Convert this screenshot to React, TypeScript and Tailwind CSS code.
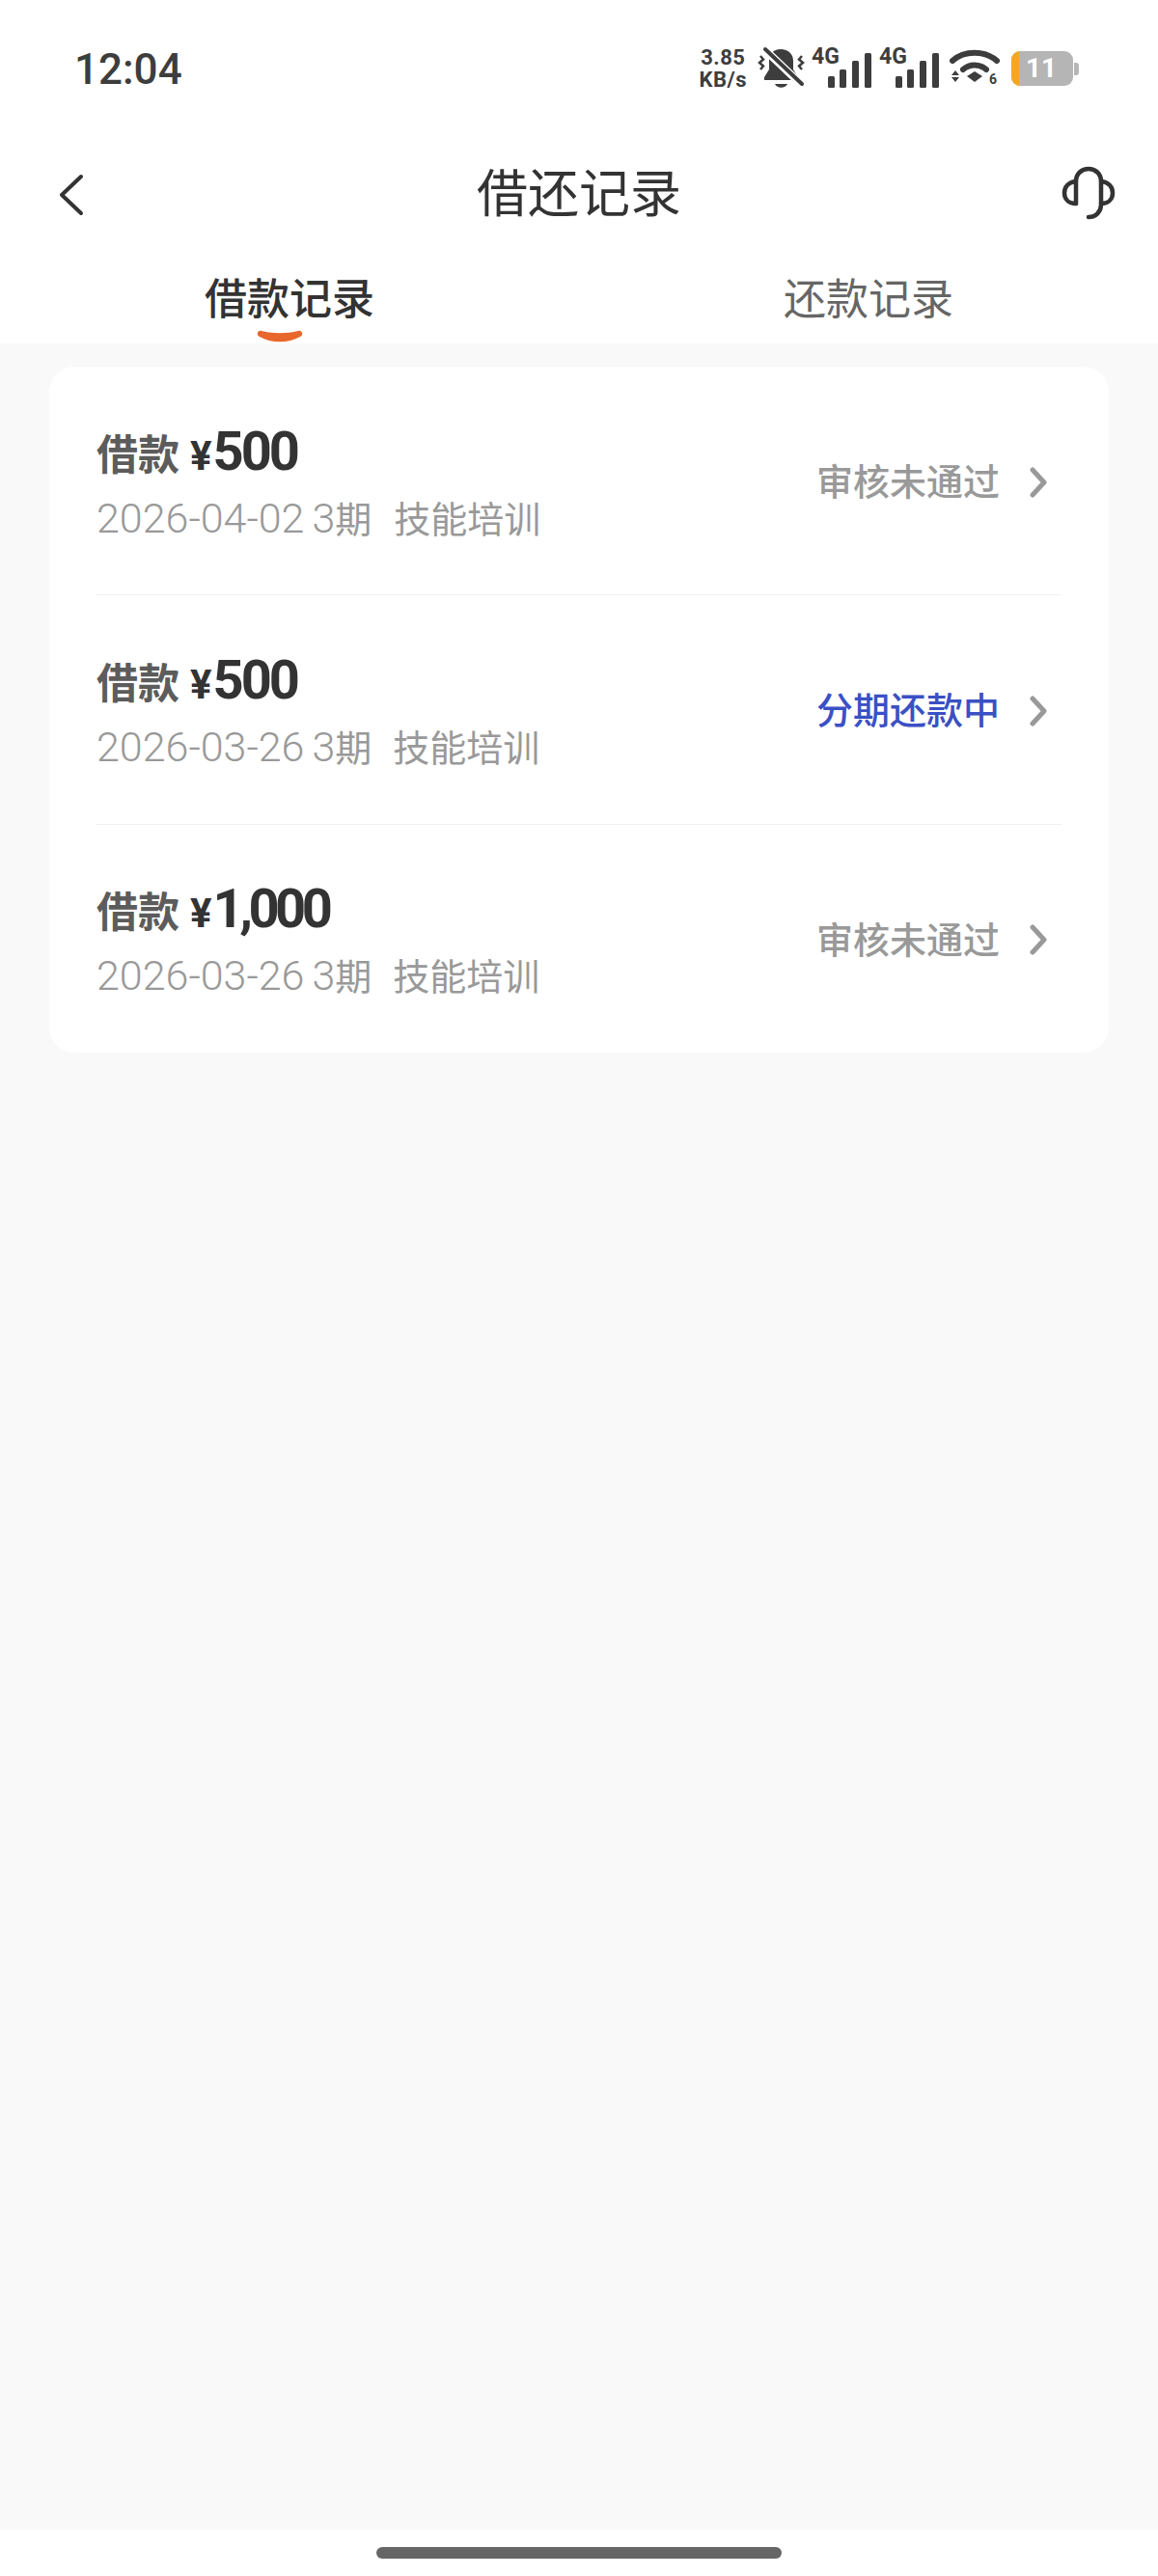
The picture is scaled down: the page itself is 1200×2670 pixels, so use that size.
const cjk = "font-['Noto_Sans_CJK_SC',sans-serif]";
const num = "font-['Roboto','Noto_Sans_CJK_SC',sans-serif]";

const records = [
  { amount: "500", track: "tracking-[-3px]", date: "2026-04-02", gap: "ml-[23px]", status: "审核未通过", active: false },
  { amount: "500", track: "tracking-[-3px]", date: "2026-03-26", gap: "ml-[22px]", status: "分期还款中", active: true },
  { amount: "1,000", track: "tracking-[-4.5px]", date: "2026-03-26", gap: "ml-[22px]", status: "审核未通过", active: false },
];

function Signal() {
  return (
    <div className="relative w-[62px] h-[40px]">
      <span className="absolute left-0 top-[-4px] text-[23px] leading-[24px] font-bold text-[#3d3d3d] font-['Roboto',sans-serif]">4G</span>
      <svg className="absolute inset-0" width="62" height="40" viewBox="0 0 62 40" fill="#3d3d3d">
        <rect x="17" y="28" width="7" height="12" rx="1.5" />
        <rect x="29" y="21" width="7" height="19" rx="1.5" />
        <rect x="42" y="12" width="7" height="28" rx="1.5" />
        <rect x="55" y="4" width="7" height="36" rx="1.5" />
      </svg>
    </div>
  );
}

function MutedBell() {
  return (
    <svg width="50" height="46" viewBox="0 0 50 46" fill="none">
      <path d="M24 3c-8 0-12 5-12 12v9l-5 8v3h35v-3l-5-8v-9c0-7-5-12-13-12z" fill="#3d3d3d" />
      <path d="M18 39c2 5 11 5 13 0z" fill="#3d3d3d" />
      <path d="M4 0l43 41" stroke="#fff" strokeWidth="8" />
      <path d="M8 3l38 36" stroke="#3d3d3d" strokeWidth="4" strokeLinecap="round" />
      <path d="M3 10l3 3.500-4 3.500 4 3.500-3 3.500" stroke="#3d3d3d" strokeWidth="2.500" />
      <path d="M46 10l-3 3.500 4 3.500-4 3.500 3 3.500" stroke="#3d3d3d" strokeWidth="2.500" />
    </svg>
  );
}

function Wifi() {
  return (
    <svg width="54" height="44" viewBox="0 0 54 44" fill="none">
      <path d="M3 14C15 3 37 3 49 14" stroke="#3d3d3d" strokeWidth="6" strokeLinecap="round" />
      <path d="M14 23c7-6 17-6 24 0" stroke="#3d3d3d" strokeWidth="6" strokeLinecap="round" />
      <path d="M18 30l8-5 8 5-8 6z" fill="#3d3d3d" />
      <path d="M2 29l4-5 4 5zM2 31h8l-4 5z" fill="#3d3d3d" />
      <text x="41" y="38" fontSize="14" fontWeight="700" fill="#3d3d3d" fontFamily="Roboto, sans-serif">6</text>
    </svg>
  );
}

function Headset() {
  return (
    <svg width="56" height="56" viewBox="0 0 56 56" fill="none" stroke="#333" strokeWidth="4.500" strokeLinecap="round" strokeLinejoin="round">
      <path d="M15 39V16c0-8 6-13 13-13s13 5 13 13v24c0 7-5 13-13 13" />
      <path d="M15 16C7 17 3 22 3 28s4 11 12 11" />
      <path d="M41 16c8 1 12 6 12 12s-4 11-12 11" />
    </svg>
  );
}

function Chevron() {
  return (
    <svg width="20" height="32" viewBox="0 0 20 32" fill="none" stroke="#999" strokeWidth="5" strokeLinecap="round" strokeLinejoin="round">
      <path d="M4 3l12 13L4 29" />
    </svg>
  );
}

export default function App() {
  return (
    <div className={`w-[1200px] h-[2670px] flex flex-col bg-white ${cjk}`}>
      <div className="h-[142px] flex items-center justify-between pl-[77px] pr-[82px] shrink-0">
        <span className="text-[44px] leading-none font-medium text-[#3d3d3d] mt-[2px] font-['Roboto',sans-serif]">12:04</span>
        <div className="flex items-center">
          <div className="flex flex-col items-center text-[22px] leading-[23px] font-bold text-[#3d3d3d] tracking-[0.5px] font-['Roboto',sans-serif]">
            <span>3.85</span>
            <span>KB/s</span>
          </div>
          <div className="ml-[11px]"><MutedBell /></div>
          <div className="ml-[6px]"><Signal /></div>
          <div className="ml-[8px]"><Signal /></div>
          <div className="ml-[11px]"><Wifi /></div>
          <div className="ml-[10px] flex items-center">
            <div className="w-[64px] h-[36px] rounded-[9px] overflow-hidden bg-[#b5b5b5] flex">
              <div className="w-[8px] bg-[#f5a623]" />
              <div className="flex-1 flex items-center justify-center pr-[10px] text-[28px] font-bold text-white font-['Roboto',sans-serif]">11</div>
            </div>
            <div className="w-[5px] h-[13px] rounded-r-[3px] bg-[#b5b5b5] ml-[1px]" />
          </div>
        </div>
      </div>

      <div className="relative h-[116px] flex items-center justify-center pb-[6px] shrink-0">
        <svg className="absolute left-[60px] top-[38px]" width="28" height="44" viewBox="0 0 28 44" fill="none" stroke="#333" strokeWidth="4" strokeLinecap="round" strokeLinejoin="round">
          <path d="M24 3L4 22l20 19" />
        </svg>
        <h1 className="text-[53px] leading-none font-normal text-[#333]">借还记录</h1>
        <div className="absolute left-[1100px] top-[30px]"><Headset /></div>
      </div>

      <div className="relative h-[98px] grid grid-cols-2 shrink-0">
        <div className="flex justify-center pt-[25px] text-[44px] leading-[48px] font-medium text-[#333]">借款记录</div>
        <div className="flex justify-center pt-[25px] text-[44px] leading-[48px] text-[#666]">还款记录</div>
        <svg className="absolute left-[266px] top-[84px]" width="48" height="14" viewBox="0 0 48 14" fill="#e8672c">
          <path d="M5 1c12 3 26 3 38 0 4-1 6 4 2 6-12 7-30 7-42 0-4-2-2-7 2-6z" />
        </svg>
      </div>

      <div className="flex-1 bg-[#f9f9f9] px-[51px] pt-[24px]">
        <div className="bg-white rounded-[26px] h-[711px] px-[49px] flex flex-col">
          {records.map((r, i) => (
            <div key={i} className={`flex-1 flex items-center justify-between ${i < records.length - 1 ? "border-b border-[#f0f0f0]" : ""}`}>
              <div className="flex flex-col mb-[10px]">
                <div className="flex items-baseline h-[79px]">
                  <span className="text-[43px] font-bold text-[#5c5c5c]">借款</span>
                  <span className={`ml-[11px] text-[42px] font-bold text-[#333] ${num}`}>¥</span>
                  <span className={`ml-[1px] text-[56px] font-bold text-[#333] ${r.track} ${num}`}>{r.amount}</span>
                </div>
                <div className="flex items-baseline h-[56px] text-[#999]">
                  <span className={`text-[43px] font-light ${num}`}>{r.date}</span>
                  <span className={`ml-[8px] text-[43px] font-light ${num}`}>3</span>
                  <span className="text-[38px]">期</span>
                  <span className={`text-[38px] ${r.gap}`}>技能培训</span>
                </div>
              </div>
              <div className="flex items-center mt-[3px]">
                <span className={`text-[38px] font-medium mb-[6px] ${r.active ? "text-[#3b50c4]" : "text-[#999]"}`}>{r.status}</span>
                <div className="ml-[30px] mr-[14px]"><Chevron /></div>
              </div>
            </div>
          ))}
        </div>
      </div>

      <div className="h-[48px] flex items-start justify-center pt-[18px] shrink-0">
        <div className="w-[420px] h-[12px] rounded-full bg-[#666]" />
      </div>
    </div>
  );
}
